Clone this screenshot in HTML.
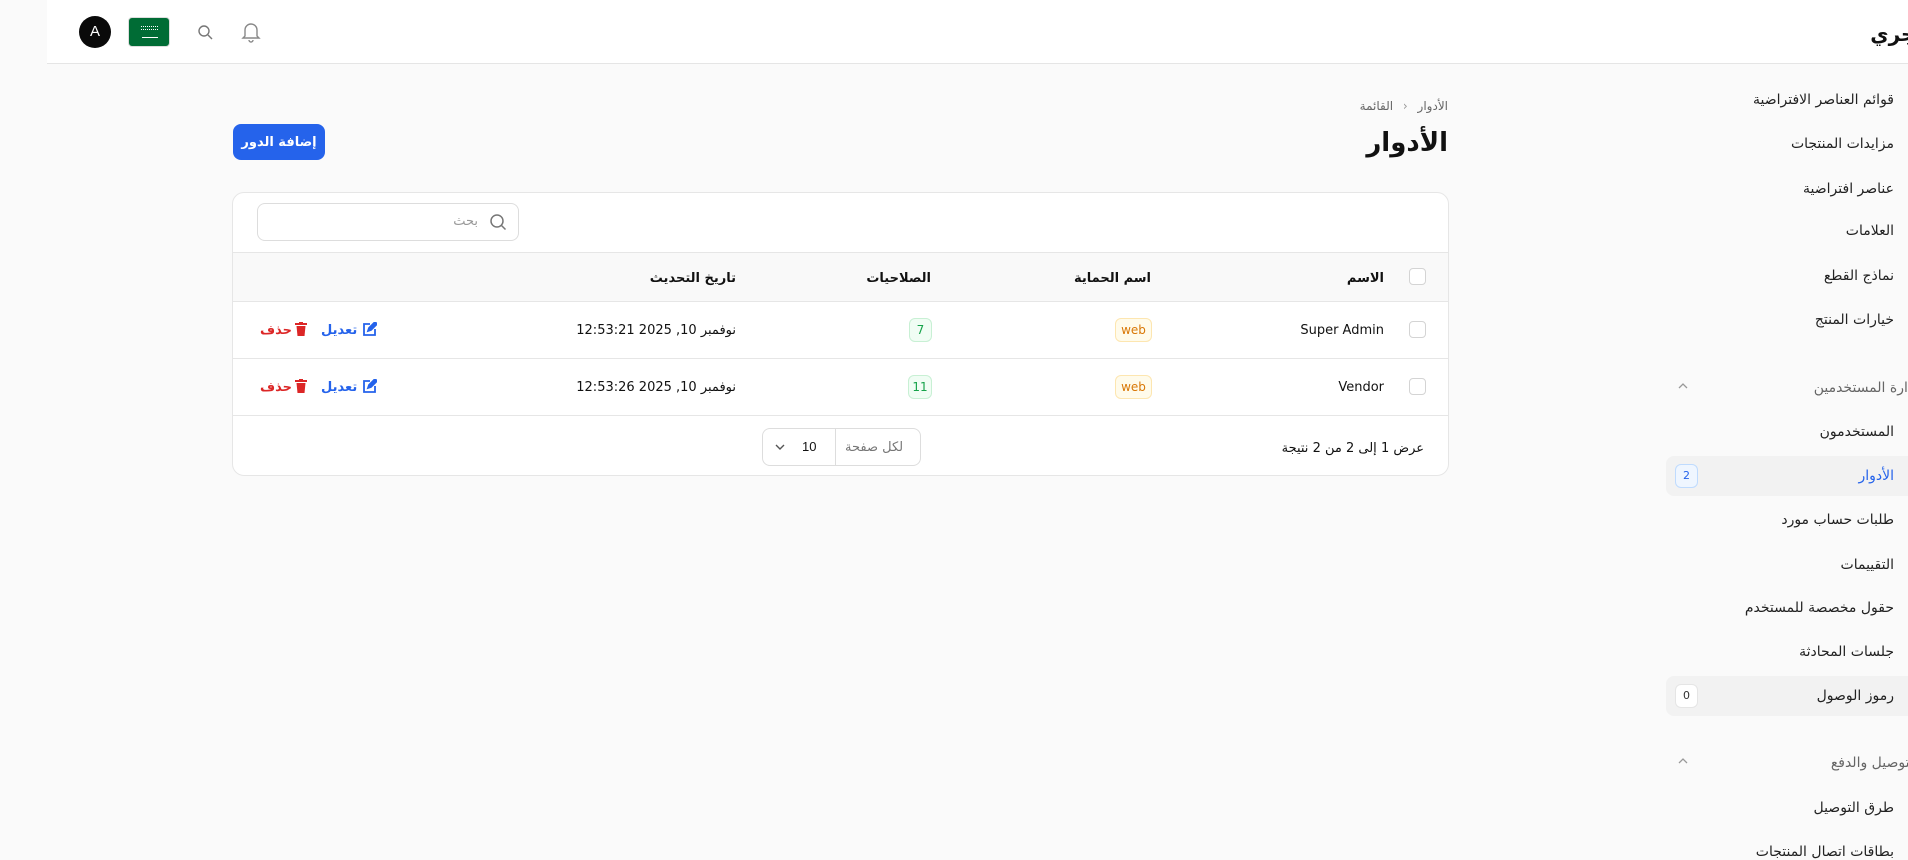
<!DOCTYPE html>
<html><head><meta charset="utf-8"><style>
*{box-sizing:border-box;margin:0;padding:0}
body{width:1908px;height:860px;overflow:hidden;background:#fafafa;font-family:"DejaVu Sans","Liberation Sans",sans-serif;color:#111;position:relative}
.a{position:absolute;white-space:nowrap}
.r{direction:rtl}
.hdr{position:absolute;left:47px;top:0;width:1861px;height:64px;background:#fff;border-bottom:1px solid #e5e5e5}
.side{font-size:14px;color:#222}
.card{position:absolute;left:232px;top:192px;width:1217px;height:284px;background:#fff;border:1px solid #e6e6e6;border-radius:12px;overflow:hidden}
.line{position:absolute;left:0;width:100%;height:1px;background:#e6e6e6}
.cb{position:absolute;width:17px;height:17px;border:1px solid #d4d4d4;border-radius:4px;background:#fff}
.badge{position:absolute;height:24px;border-radius:6px;font-size:12px;text-align:center;line-height:22px}
.th{font-size:13px;font-weight:bold;color:#111}
.td{font-size:13px;color:#111}
</style></head><body>
<div class="hdr"></div>
<div class="a" style="left:79px;top:16px;width:32px;height:32px;border-radius:50%;background:#0a0a0a;color:#fff;font:15px 'Liberation Sans',sans-serif;text-align:center;line-height:32px">A</div>
<div class="a" style="left:128px;top:17px;width:42px;height:30px;border-radius:4px;background:#006c35;border:1px solid #ddd">
<div style="position:absolute;left:12px;top:8px;width:17px;height:4px;border-top:1px dotted #fff;border-bottom:1px dotted #fff"></div>
<div style="position:absolute;left:13px;top:19px;width:16px;height:1px;background:#fff"></div></div>
<svg class="a" style="left:197px;top:24px" width="16" height="16" viewBox="0 0 16 16" fill="none" stroke="#777" stroke-width="1.4"><circle cx="7" cy="7" r="5"/><path d="M11 11l4 4"/></svg>
<svg class="a" style="left:241px;top:21px" width="20" height="22" viewBox="0 0 20 22" fill="none" stroke="#888" stroke-width="1.4"><path d="M4 15V9a6 6 0 0 1 12 0v6l2 2H2z"/><path d="M8 19a2 2 0 0 0 4 0"/></svg>
<div class="a r" style="left:1876px;top:22px;font-size:20px;font-weight:bold;width:60px">متجري</div>

<div class="a r side" style="right:14px;top:92px">قوائم العناصر الافتراضية</div>
<div class="a r side" style="right:14px;top:136px">مزايدات المنتجات</div>
<div class="a r side" style="right:14px;top:181px">عناصر افتراضية</div>
<div class="a r side" style="right:14px;top:223px">العلامات</div>
<div class="a r side" style="right:14px;top:268px">نماذج القطع</div>
<div class="a r side" style="right:14px;top:312px">خيارات المنتج</div>
<div class="a r side" style="right:-10px;top:380px;color:#666">إدارة المستخدمين</div>
<svg class="a" style="left:1677px;top:382px" width="12" height="8" viewBox="0 0 12 8" fill="none" stroke="#999" stroke-width="1.3"><path d="M2 6l4-4 4 4"/></svg>
<div class="a r side" style="right:14px;top:424px">المستخدمون</div>
<div class="a" style="left:1666px;top:456px;width:260px;height:40px;background:#f2f2f2;border-radius:8px"></div>
<div class="a r side" style="right:14px;top:468px;color:#2563eb">الأدوار</div>
<div class="a" style="left:1675px;top:464px;width:23px;height:24px;border:1px solid #bfdbfe;background:#eff6ff;border-radius:6px;color:#2563eb;font-size:11px;text-align:center;line-height:22px">2</div>
<div class="a r side" style="right:14px;top:512px">طلبات حساب مورد</div>
<div class="a r side" style="right:14px;top:557px">التقييمات</div>
<div class="a r side" style="right:14px;top:600px">حقول مخصصة للمستخدم</div>
<div class="a r side" style="right:14px;top:644px">جلسات المحادثة</div>
<div class="a" style="left:1666px;top:676px;width:260px;height:40px;background:#f2f2f2;border-radius:8px"></div>
<div class="a r side" style="right:14px;top:688px">رموز الوصول</div>
<div class="a" style="left:1675px;top:684px;width:23px;height:24px;border:1px solid #e5e5e5;background:#fff;border-radius:6px;color:#333;font-size:11px;text-align:center;line-height:22px">0</div>
<div class="a r side" style="right:-10px;top:755px;color:#666">التوصيل والدفع</div>
<svg class="a" style="left:1677px;top:757px" width="12" height="8" viewBox="0 0 12 8" fill="none" stroke="#999" stroke-width="1.3"><path d="M2 6l4-4 4 4"/></svg>
<div class="a r side" style="right:14px;top:800px">طرق التوصيل</div>
<div class="a r side" style="right:14px;top:844px">بطاقات اتصال المنتجات</div>

<div class="a r" style="right:460px;top:99px;font-size:12px;color:#666">الأدوار <span style="color:#999;margin:0 6px">‹</span> القائمة</div>
<div class="a r" style="right:460px;top:128px;font-size:26px;font-weight:bold">الأدوار</div>
<div class="a r" style="left:233px;top:124px;width:92px;height:36px;background:#2563eb;border-radius:8px;color:#fff;font-size:13px;font-weight:bold;text-align:center;line-height:38px">إضافة الدور</div>

<div class="card">
<div class="a" style="left:24px;top:10px;width:262px;height:38px;border:1px solid #ddd;border-radius:8px"></div>
<svg class="a" style="left:256px;top:20px" width="18" height="18" viewBox="0 0 18 18" fill="none" stroke="#777" stroke-width="1.5"><circle cx="8" cy="8" r="6"/><path d="M12.5 12.5l4 4"/></svg>
<div class="a r" style="right:970px;top:21px;font-size:13px;color:#999">بحث</div>
<div class="line" style="top:59px"></div>
<div class="a" style="left:0;top:60px;width:100%;height:49px;background:#f9f9f9"></div>
<div class="line" style="top:108px"></div>
<div class="line" style="top:165px"></div>
<div class="line" style="top:222px"></div>
<div class="cb" style="left:1176px;top:75px"></div>
<div class="a r th" style="right:64px;top:78px">الاسم</div>
<div class="a r th" style="right:297px;top:78px">اسم الحماية</div>
<div class="a r th" style="right:517px;top:78px">الصلاحيات</div>
<div class="a r th" style="right:712px;top:78px">تاريخ التحديث</div>

<div class="cb" style="left:1176px;top:128px"></div>
<div class="a td" style="right:64px;top:130px">Super Admin</div>
<div class="badge" style="left:882px;top:125px;width:37px;background:#fffbeb;border:1px solid #fde6b0;color:#d97706">web</div>
<div class="badge" style="left:676px;top:125px;width:23px;background:#f0fdf4;border:1px solid #c8f0d4;color:#16a34a">7</div>
<div class="a r td" style="right:712px;top:130px">نوفمبر 10, 2025 12:53:21</div>
<div class="a r" style="left:27px;top:130px;font-size:13px;font-weight:bold;color:#dc2626">حذف</div>
<svg class="a" style="left:62px;top:129px" width="12" height="14" viewBox="0 0 12 14" fill="#dc2626"><rect x="0" y="1" width="12" height="2"/><rect x="4" y="0" width="4" height="2"/><path d="M1.5 4h9l-1 10h-7z"/></svg>
<div class="a r" style="left:88px;top:130px;font-size:13px;font-weight:bold;color:#2563eb">تعديل</div>
<svg class="a" style="left:130px;top:129px" width="14" height="14" viewBox="0 0 14 14" fill="none" stroke="#2563eb" stroke-width="1.8"><path d="M7 2H1v11h11V7"/><path d="M5 9l1-3 6-6 2 2-6 6z" fill="#2563eb"/></svg>

<div class="cb" style="left:1176px;top:185px"></div>
<div class="a td" style="right:64px;top:187px">Vendor</div>
<div class="badge" style="left:882px;top:182px;width:37px;background:#fffbeb;border:1px solid #fde6b0;color:#d97706">web</div>
<div class="badge" style="left:675px;top:182px;width:24px;background:#f0fdf4;border:1px solid #c8f0d4;color:#16a34a">11</div>
<div class="a r td" style="right:712px;top:187px">نوفمبر 10, 2025 12:53:26</div>
<div class="a r" style="left:27px;top:187px;font-size:13px;font-weight:bold;color:#dc2626">حذف</div>
<svg class="a" style="left:62px;top:186px" width="12" height="14" viewBox="0 0 12 14" fill="#dc2626"><rect x="0" y="1" width="12" height="2"/><rect x="4" y="0" width="4" height="2"/><path d="M1.5 4h9l-1 10h-7z"/></svg>
<div class="a r" style="left:88px;top:187px;font-size:13px;font-weight:bold;color:#2563eb">تعديل</div>
<svg class="a" style="left:130px;top:186px" width="14" height="14" viewBox="0 0 14 14" fill="none" stroke="#2563eb" stroke-width="1.8"><path d="M7 2H1v11h11V7"/><path d="M5 9l1-3 6-6 2 2-6 6z" fill="#2563eb"/></svg>

<div class="a r td" style="right:24px;top:248px">عرض 1 إلى 2 من 2 نتيجة</div>
<div class="a" style="left:529px;top:235px;width:159px;height:38px;border:1px solid #ddd;border-radius:8px"></div>
<div class="a" style="left:602px;top:236px;width:1px;height:36px;background:#ddd"></div>
<div class="a r" style="left:612px;top:247px;font-size:13px;color:#777">لكل صفحة</div>
<div class="a" style="left:569px;top:246px;font:13px 'Liberation Sans',sans-serif">10</div>
<svg class="a" style="left:541px;top:250px" width="12" height="8" viewBox="0 0 12 8" fill="none" stroke="#555" stroke-width="1.4"><path d="M2 2l4 4 4-4"/></svg>
</div>
</body></html>
